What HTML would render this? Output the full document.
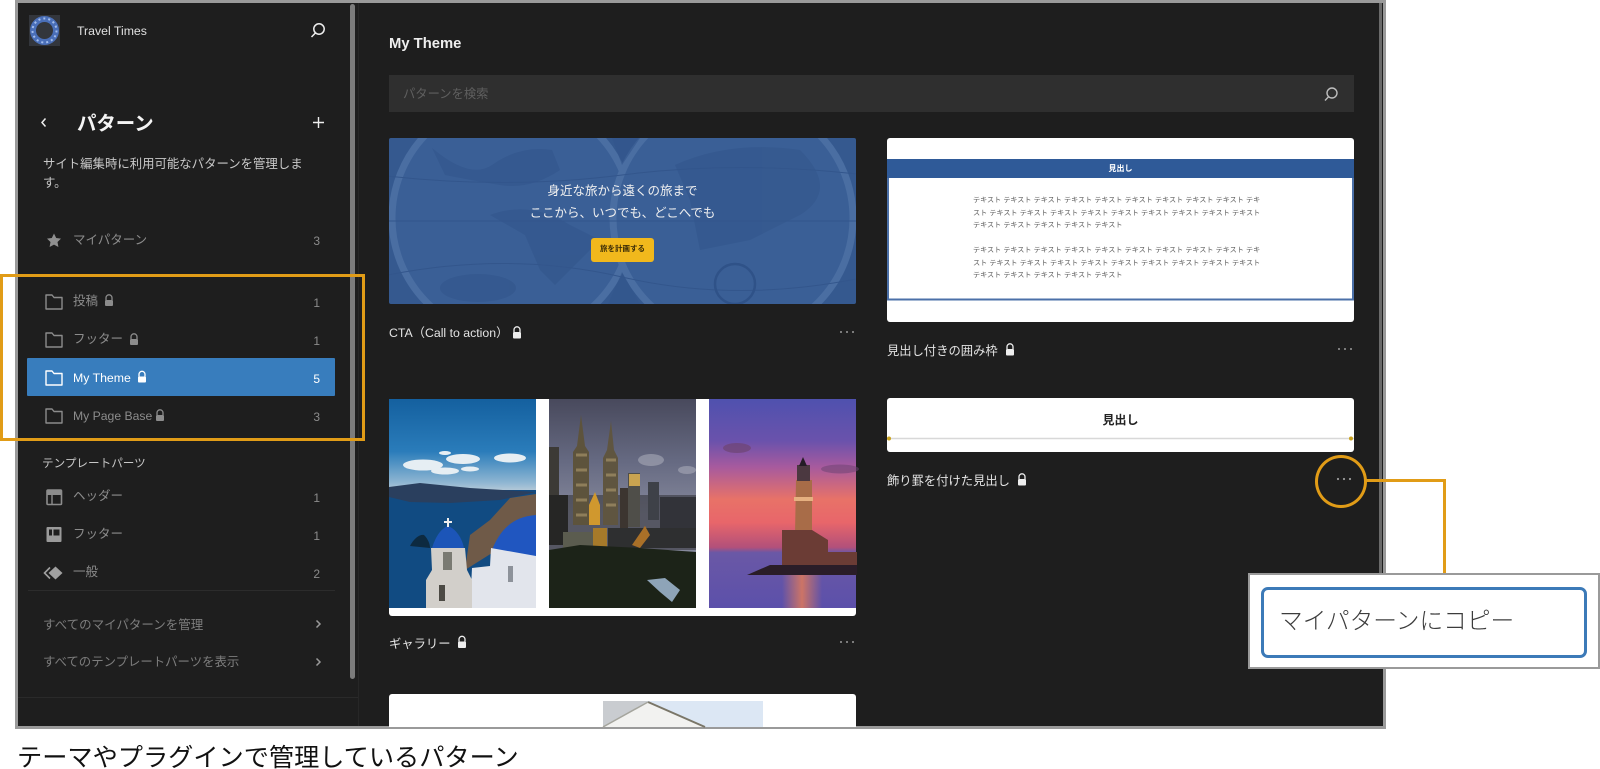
<!DOCTYPE html>
<html lang="ja"><head><meta charset="utf-8"><title>パターン</title>
<style>
html,body{margin:0;padding:0;background:#fff}
#p{position:relative;width:1600px;height:769px;overflow:hidden;background:#fff;font-family:"Liberation Sans","Noto Sans CJK JP",sans-serif}
#p div{position:absolute;box-sizing:border-box}
.t{white-space:nowrap;line-height:20px;height:20px}
.g{color:#8c8c8c;font-size:12.5px}
.w{color:#e4e4e4;font-size:12.3px}
.n{color:#8c8c8c;font-size:12px;width:12px;text-align:right;left:308px}
svg{position:absolute;left:0;top:0}
</style></head><body><div id="p">
<div style="left:15px;top:0;width:1371px;height:729px;background:#1e1e1e;border:3px solid #9a9a9a"></div>
<div style="left:358px;top:3px;width:1px;height:723px;background:#272727"></div>
<div style="left:18px;top:697px;width:340px;height:1px;background:#2a2a2a"></div>
<div style="left:350px;top:4px;width:5px;height:675px;background:#7c7c7c;border-radius:3px"></div>
<div style="left:1379px;top:3px;width:3px;height:570px;background:#6a6a6a"></div>
<div style="left:28px;top:590px;width:307px;height:1px;background:#2c2c2c"></div>

<div style="left:27px;top:358px;width:308px;height:38px;background:#387dbd;border-radius:1px"></div>

<div class="t" style="left:77px;top:21px;font-size:12.3px;color:#e0e0e0">Travel Times</div>
<div class="t" style="left:77px;top:113px;font-size:19.4px;font-weight:700;color:#f4f4f4;height:22px;line-height:22px">パターン</div>
<div class="t" style="left:43px;top:154px;font-size:12.4px;color:#c8c8c8">サイト編集時に利用可能なパターンを管理しま</div>
<div class="t" style="left:43px;top:173px;font-size:12.4px;color:#c8c8c8">す。</div>
<div class="t g" style="left:73px;top:230px">マイパターン</div><div class="t n" style="top:231px">3</div>
<div class="t g" style="left:73px;top:291px">投稿</div><div class="t n" style="top:293px">1</div>
<div class="t g" style="left:73px;top:329px">フッター</div><div class="t n" style="top:331px">1</div>
<div class="t" style="left:73px;top:368px;font-size:12.3px;color:#fff">My Theme</div><div class="t n" style="top:369px;color:#fff">5</div>
<div class="t g" style="left:73px;top:406px;font-size:12.2px">My Page Base</div><div class="t n" style="top:407px">3</div>
<div class="t" style="left:42px;top:454px;font-size:11.6px;color:#c8c8c8">テンプレートパーツ</div>
<div class="t g" style="left:73px;top:486px">ヘッダー</div><div class="t n" style="top:488px">1</div>
<div class="t g" style="left:73px;top:524px">フッター</div><div class="t n" style="top:526px">1</div>
<div class="t g" style="left:73px;top:562px">一般</div><div class="t n" style="top:564px">2</div>
<div class="t" style="left:43px;top:615px;font-size:12.5px;color:#7d7d7d">すべてのマイパターンを管理</div>
<div class="t" style="left:43px;top:652px;font-size:12.4px;color:#7d7d7d">すべてのテンプレートパーツを表示</div>

<div class="t" style="left:389px;top:34px;font-size:14.8px;font-weight:700;color:#eee">My Theme</div>
<div style="left:389px;top:75px;width:965px;height:37px;background:#2f2f2f"></div>
<div class="t" style="left:403px;top:84px;font-size:12.3px;color:#5f5f5f">パターンを検索</div>

<div style="left:389px;top:138px;width:467px;height:166px;background:#35598f;border-radius:2px"></div>
<div style="left:887px;top:138px;width:467px;height:184px;background:#fff;border-radius:3px"></div>
<div style="left:389px;top:399px;width:467px;height:217px;background:#fff;border-radius:3px"></div>
<div style="left:887px;top:398px;width:467px;height:54px;background:#fff;border-radius:3px"></div>
<div style="left:389px;top:694px;width:467px;height:33px;background:#fff;border-radius:3px 3px 0 0"></div>

<svg width="1600" height="769" viewBox="0 0 1600 769" fill="none">
<defs>
<clipPath id="cm"><rect x="389" y="138" width="467" height="166" rx="2"/></clipPath>
<linearGradient id="s1" x1="0" y1="0" x2="0" y2="1"><stop offset="0" stop-color="#14609f"/><stop offset=".25" stop-color="#2a7cba"/><stop offset=".40" stop-color="#8fb6d2"/><stop offset=".44" stop-color="#b6cad8"/></linearGradient>
<linearGradient id="s2" x1="0" y1="0" x2="0" y2="1"><stop offset="0" stop-color="#48495c"/><stop offset=".3" stop-color="#666a82"/><stop offset=".55" stop-color="#85889b"/></linearGradient>
<linearGradient id="s3" x1="0" y1="0" x2="0" y2="1"><stop offset="0" stop-color="#4f51ae"/><stop offset=".2" stop-color="#6a52ac"/><stop offset=".325" stop-color="#a75a9e"/><stop offset=".48" stop-color="#e87268"/><stop offset=".59" stop-color="#e8666a"/><stop offset=".71" stop-color="#b2507a"/><stop offset=".735" stop-color="#6a58a6"/><stop offset="1" stop-color="#5c50aa"/></linearGradient>
<linearGradient id="rf" x1="0" y1="0" x2="1" y2="0"><stop offset="0" stop-color="#e07a5a" stop-opacity="0"/><stop offset=".5" stop-color="#e07a5a" stop-opacity=".85"/><stop offset="1" stop-color="#e07a5a" stop-opacity="0"/></linearGradient>
</defs>

<!-- logo -->
<rect x="29" y="15" width="31" height="31" fill="#33363c"/>
<circle cx="44.5" cy="30.5" r="11.5" stroke="#4a6fb8" stroke-width="6"/>
<circle cx="44.5" cy="30.5" r="12" stroke="#a3bdec" stroke-width="2" stroke-dasharray="2 3"/>
<!-- header icons -->
<circle cx="319" cy="29" r="5.2" stroke="#eee" stroke-width="1.5"/><path d="M315.4 33 L311.5 37" stroke="#eee" stroke-width="1.5"/>
<path d="M45.500 118.500 L42 122.500 L45.500 126.500" stroke="#eee" stroke-width="1.5"/>
<path d="M318.500 117 V128 M313 122.500 H324" stroke="#eee" stroke-width="1.4"/>
<path d="M54 233.500 L56.200 238 L61 238.600 L57.500 242 L58.400 247 L54 244.600 L49.600 247 L50.500 242 L47 238.600 L51.800 238 Z" fill="#909090"/>
<!-- folders -->
<g stroke="#8c8c8c" stroke-width="1.4" stroke-linejoin="round">
<path d="M46 295 H52 L54 297.500 H62 V309 H46 Z"/>
<path d="M46 333 H52 L54 335.500 H62 V347 H46 Z"/>
<path d="M46 409 H52 L54 411.500 H62 V423 H46 Z"/>
</g>
<path d="M46 371 H52 L54 373.500 H62 V385 H46 Z" stroke="#fff" stroke-width="1.4" stroke-linejoin="round"/>
<!-- locks -->
<path d="M106 300 v-2.200 a3 3 0 0 1 6 0 V300" stroke="#8c8c8c" stroke-width="1.300"/><rect x="105" y="300" width="8" height="6" rx="1" fill="#8c8c8c"/>
<path d="M131 339 v-2.200 a3 3 0 0 1 6 0 V339" stroke="#8c8c8c" stroke-width="1.300"/><rect x="130" y="339" width="8" height="6" rx="1" fill="#8c8c8c"/>
<path d="M139 376.500 v-2.200 a3 3 0 0 1 6 0 V376.500" stroke="#fff" stroke-width="1.300"/><rect x="138" y="376.500" width="8" height="6" rx="1" fill="#fff"/>
<path d="M157 415 v-2.200 a3 3 0 0 1 6 0 V415" stroke="#8c8c8c" stroke-width="1.300"/><rect x="156" y="415" width="8" height="6" rx="1" fill="#8c8c8c"/>
<path d="M514 332 v-2.200 a3 3 0 0 1 6 0 V332" stroke="#eee" stroke-width="1.300"/><rect x="513" y="332" width="8" height="6.500" rx="1" fill="#eee"/>
<path d="M1007 349 v-2.200 a3 3 0 0 1 6 0 V349" stroke="#eee" stroke-width="1.300"/><rect x="1006" y="349" width="8" height="6.500" rx="1" fill="#eee"/>
<path d="M459 641.500 v-2.200 a3 3 0 0 1 6 0 V641.500" stroke="#eee" stroke-width="1.300"/><rect x="458" y="641.500" width="8" height="6.500" rx="1" fill="#eee"/>
<path d="M1019 479 v-2.200 a3 3 0 0 1 6 0 V479" stroke="#eee" stroke-width="1.300"/><rect x="1018" y="479" width="8" height="6.500" rx="1" fill="#eee"/>
<!-- template icons -->
<rect x="47" y="490" width="14.500" height="14.500" rx="1" stroke="#8c8c8c" stroke-width="1.600"/><rect x="47" y="490" width="14.500" height="5" fill="#8c8c8c"/><path d="M52 495 V504" stroke="#8c8c8c" stroke-width="1.400"/>
<rect x="46.500" y="527" width="15" height="15" rx="1" fill="#9a9a9a"/><rect x="49" y="529.500" width="3" height="6" fill="#1e1e1e"/><rect x="53.500" y="529.500" width="6" height="6" fill="#1e1e1e"/>
<path d="M55.500 566.500 L62.500 573 L55.500 579.500 L48.500 573 Z" fill="#a0a0a0"/><path d="M50 567.500 L44.500 573 L50 578.500" stroke="#a0a0a0" stroke-width="1.600"/>
<path d="M316.500 620.500 L320 624 L316.500 627.500 M316.500 658.500 L320 662 L316.500 665.500" stroke="#999" stroke-width="1.500"/>
<!-- search -->
<circle cx="1332" cy="93" r="5" stroke="#bdbdbd" stroke-width="1.400"/><path d="M1328.500 96.800 L1325 100.500" stroke="#bdbdbd" stroke-width="1.400"/>

<!-- map -->
<g clip-path="url(#cm)">
<circle cx="512" cy="218" r="120" fill="#3a5f96" stroke="#4a6ea2" stroke-width="7"/>
<circle cx="733" cy="218" r="120" fill="#3a5f96" stroke="#4a6ea2" stroke-width="7"/>
<path d="M378 221 H866 M378 175 Q505 190 622 175 T866 175 M378 277 Q505 250 622 277 T866 277" stroke="#33568c" stroke-width="1"/>
<g fill="#33568c" opacity=".6">
<path d="M432 148 Q470 180 492 165 Q520 145 552 150 L560 170 Q530 190 500 185 Q470 180 445 175 Z"/>
<path d="M490 215 Q530 200 570 225 L600 240 L555 285 L540 270 L525 235 Z"/>
<path d="M675 165 Q730 140 800 150 Q840 190 800 215 L750 240 L700 250 L690 200 Z"/>
<ellipse cx="478" cy="288" rx="38" ry="14"/>
<path d="M612 138 L622 165 L640 138 Z M608 304 L622 272 L640 304 Z"/>
</g>
<ellipse cx="735" cy="284" rx="20" ry="20" stroke="#2f5288" stroke-width="2.500"/>
</g>
<!-- gallery 1 -->
<rect x="389" y="399" width="147" height="209" fill="url(#s1)"/>
<g fill="#e6eef3"><ellipse cx="423" cy="465" rx="20" ry="5.500"/><ellipse cx="463" cy="459" rx="17" ry="5"/><ellipse cx="510" cy="458" rx="16" ry="4.500"/><ellipse cx="445" cy="471" rx="14" ry="3.500"/><ellipse cx="470" cy="469" rx="9" ry="2.500"/><ellipse cx="445" cy="453" rx="6" ry="2"/></g>
<rect x="389" y="490" width="147" height="118" fill="#114b82"/>
<path d="M389 487 L420 483 L470 488 L536 492 L500 500 L450 503 L410 502 L389 497 Z" fill="#2a3f5e"/>
<path d="M536 494 L510 498 L490 520 L470 535 L465 570 L500 548 L536 530 Z" fill="#6f5a48"/>
<path d="M410 546 C414 538 420 534 424 535 C428 539 430 544 430 548 Z" fill="#0d2a40"/>
<path d="M536 515 C508 517 498 535 491 552 L536 556 Z" fill="#2056c0"/>
<path d="M491 548 L536 556 V608 H470 L472 568 L490 566 Z" fill="#e2e5ec"/>
<path d="M432 548 C436 535 442 528 448 526 C456 529 462 538 464 548 Z" fill="#1c55b8"/>
<rect x="447" y="518" width="2" height="9" fill="#eee"/><rect x="444" y="521" width="8" height="2" fill="#eee"/>
<path d="M431 548 H465 L467 570 L472 580 L472 608 H426 L426 580 L432 570 Z" fill="#d2cfca"/>
<rect x="443" y="552" width="9" height="18" fill="#7a7a72"/>
<rect x="439" y="585" width="6" height="16" fill="#4c4a44"/>
<rect x="508" y="566" width="5" height="16" fill="#8d929a"/>
<!-- gallery 2 -->
<rect x="549" y="399" width="147" height="209" fill="url(#s2)"/>
<g fill="#a8aab8" opacity=".6"><ellipse cx="651" cy="460" rx="13" ry="6"/><ellipse cx="687" cy="470" rx="9" ry="4"/></g>
<rect x="549" y="447" width="10" height="55" fill="#3c3a36"/>
<rect x="660" y="497" width="36" height="50" fill="#37393f"/>
<rect x="549" y="495" width="147" height="55" fill="#2f3034" opacity=".55"/>
<rect x="549" y="495" width="19" height="50" fill="#262625"/>
<path d="M573 525 V452 L577 446 L581 415 L585 446 L589 452 V525 Z" fill="#5d533c"/>
<path d="M603 525 V458 L607 450 L611 421 L614 450 L618 458 V525 Z" fill="#5f5540"/>
<path d="M576 455 H587 M576 470 H587 M576 485 H587 M576 500 H587 M576 515 H587 M606 460 H616 M606 475 H616 M606 490 H616 M606 505 H616" stroke="#b7a373" stroke-width="3" opacity=".55"/>
<rect x="628" y="473" width="12" height="54" fill="#4f4e49"/><rect x="629" y="474" width="11" height="12" fill="#c9a350"/>
<rect x="648" y="482" width="11" height="38" fill="#3e4148"/>
<rect x="620" y="488" width="8" height="40" fill="#3c3530"/>
<path d="M589 525 V505 L595 492 L600 505 V525 Z" fill="#d0982e"/>
<rect x="563" y="532" width="30" height="18" fill="#5b5c4f"/>
<rect x="593" y="528" width="14" height="25" fill="#a67a2a"/>
<path d="M632 545 L645 526 L650 535 L640 548 Z" fill="#a97028"/>
<rect x="608" y="528" width="88" height="20" fill="#2e2f30"/>
<path d="M632 545 L645 526 L650 535 L640 548 Z" fill="#a97028"/>
<path d="M549 550 L580 545 L640 548 L696 552 V608 H549 Z" fill="#1c2318"/>
<path d="M647 580 L665 578 L680 590 L672 602 L660 592 Z" fill="#8ea4b8"/>
<!-- gallery 3 -->
<rect x="709" y="399" width="147" height="209" fill="url(#s3)"/>
<rect x="782" y="575" width="40" height="33" fill="url(#rf)"/>
<ellipse cx="737" cy="448" rx="14" ry="5" fill="#6d4472" opacity=".7"/><ellipse cx="840" cy="469" rx="19" ry="4.500" fill="#6d4472" opacity=".55"/>
<path d="M795 535 H812 V480 H796 Z" fill="#a86c48"/>
<rect x="797" y="465" width="13" height="16" fill="#4b3840"/>
<path d="M799 466 L803 457 L807 466 Z" fill="#241c26"/>
<rect x="794" y="497" width="19" height="4" fill="#e6b080"/>
<path d="M782 567 V530 H812 L828 540 V552 H857 V567 Z" fill="#6b3c35"/>
<path d="M747 575 L770 565 H857 V575 Z" fill="#2a1d28"/>
<!-- card 2 -->
<rect x="887" y="159" width="467" height="19" fill="#2f5a98"/>
<path d="M888 178 V299.500 H1354 M1353 178 V299" stroke="#4b70a8" stroke-width="2"/>
<!-- card 4 -->
<path d="M887 438.500 H1354" stroke="#d8d8d8" stroke-width="1.500"/>
<circle cx="889" cy="438.500" r="2" fill="#c9a21e"/><circle cx="1351" cy="438.500" r="2" fill="#c9a21e"/>
<!-- dots -->
<g fill="#9a9a9a">
<circle cx="841" cy="332" r="1"/><circle cx="847" cy="332" r="1"/><circle cx="853" cy="332" r="1"/>
<circle cx="1339" cy="349" r="1"/><circle cx="1345" cy="349" r="1"/><circle cx="1351" cy="349" r="1"/>
<circle cx="841" cy="642" r="1"/><circle cx="847" cy="642" r="1"/><circle cx="853" cy="642" r="1"/>
<circle cx="1338" cy="479" r="1.100"/><circle cx="1344" cy="479" r="1.100"/><circle cx="1350" cy="479" r="1.100"/>
</g>
<!-- card 5 image -->
<rect x="603" y="701" width="160" height="26" fill="#dce7f4"/>
<path d="M603 701 H640 L648 701 L603 727 Z" fill="#c9ccd0"/>
<path d="M603 727 L648 702 L705 727 Z" fill="#f2f2f0"/>
<path d="M648 702 L705 727" stroke="#7a7668" stroke-width="2"/>
<path d="M648 702 L603 727" stroke="#a5a59d" stroke-width="1.500"/>
</svg>

<div class="t" style="left:389px;top:323px;font-size:12.3px;color:#e4e4e4">CTA（Call to action）</div>
<div class="t w" style="left:887px;top:341px">見出し付きの囲み枠</div>
<div class="t w" style="left:389px;top:634px">ギャラリー</div>
<div class="t w" style="left:887px;top:471px">飾り罫を付けた見出し</div>

<div class="t" style="left:389px;width:467px;text-align:center;top:181px;font-size:12.5px;color:#f0f0f0">身近な旅から遠くの旅まで</div>
<div class="t" style="left:389px;width:467px;text-align:center;top:203px;font-size:12.5px;color:#f0f0f0">ここから、いつでも、どこへでも</div>
<div style="left:591px;top:238px;width:63px;height:24px;background:#f1b81c;border-radius:3px"></div>
<div class="t" style="left:591px;width:63px;text-align:center;top:239px;font-size:7.500px;font-weight:700;color:#3a2c08">旅を計画する</div>

<div class="t" style="left:887px;width:467px;text-align:center;top:159px;font-size:8px;font-weight:700;color:#fff;height:19px;line-height:19px">見出し</div>
<div style="left:973px;top:194px;width:292px;font-size:7.100px;line-height:12.500px;color:#5c5c5c;white-space:nowrap;word-spacing:.2px">テキスト テキスト テキスト テキスト テキスト テキスト テキスト テキスト テキスト テキ<br>スト テキスト テキスト テキスト テキスト テキスト テキスト テキスト テキスト テキスト<br>テキスト テキスト テキスト テキスト テキスト</div>
<div style="left:973px;top:244px;width:292px;font-size:7.100px;line-height:12.500px;color:#5c5c5c;white-space:nowrap;word-spacing:.2px">テキスト テキスト テキスト テキスト テキスト テキスト テキスト テキスト テキスト テキ<br>スト テキスト テキスト テキスト テキスト テキスト テキスト テキスト テキスト テキスト<br>テキスト テキスト テキスト テキスト テキスト</div>
<div class="t" style="left:887px;width:467px;text-align:center;top:410px;font-size:12px;font-weight:700;color:#222">見出し</div>

<!-- orange annotations -->
<div style="left:0;top:274px;width:365px;height:167px;border:3px solid #e19c17"></div>
<div style="left:1315px;top:455px;width:52px;height:53px;border:3px solid #e19c17;border-radius:50%"></div>
<div style="left:1366px;top:479px;width:80px;height:3px;background:#e19c17"></div>
<div style="left:1443px;top:479px;width:3px;height:95px;background:#e19c17"></div>
<div style="left:1248px;top:573px;width:352px;height:96px;background:#fff;border:2.500px solid #9a9a9a"></div>
<div style="left:1261px;top:587px;width:326px;height:71px;background:#fff;border:3px solid #3c7ab8;border-radius:7px"></div>
<div class="t" style="left:1279px;top:607px;font-size:23.700px;height:30px;line-height:30px;color:#3c3c3c;font-weight:300">マイパターンにコピー</div>

<div class="t" style="left:17px;top:743px;font-size:25.200px;height:30px;line-height:30px;color:#111">テーマやプラグインで管理しているパターン</div>
</div></body></html>
